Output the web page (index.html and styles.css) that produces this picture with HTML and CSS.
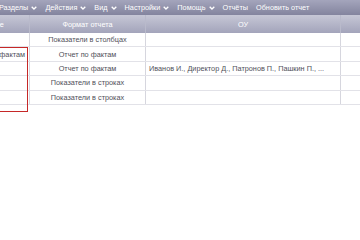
FILE: index.html
```html
<!DOCTYPE html>
<html lang="ru">
<head>
    <meta charset="UTF-8">
    <title>Отчеты</title>
    <link rel="stylesheet" href="styles.css">
</head>
<body>
    <div class="page">
        <!-- Верхнее меню -->
        <div class="menu">
            <span class="menu-item">Разделы <svg class="chev" viewBox="0 0 6 4"><polyline points="0.7,0.7 3,3 5.3,0.7"/></svg></span>
            <span class="menu-item">Действия <svg class="chev" viewBox="0 0 6 4"><polyline points="0.7,0.7 3,3 5.3,0.7"/></svg></span>
            <span class="menu-item">Вид <svg class="chev" viewBox="0 0 6 4"><polyline points="0.7,0.7 3,3 5.3,0.7"/></svg></span>
            <span class="menu-item">Настройки <svg class="chev" viewBox="0 0 6 4"><polyline points="0.7,0.7 3,3 5.3,0.7"/></svg></span>
            <span class="menu-item">Помощь <svg class="chev" viewBox="0 0 6 4"><polyline points="0.7,0.7 3,3 5.3,0.7"/></svg></span>
            <span class="menu-item">Отчёты</span>
            <span class="menu-item">Обновить отчет</span>
        </div>

        <!-- Таблица отчетов -->
        <div class="grid">
            <div class="row head">
                <div class="cell c1">Название</div>
                <div class="cell c2">Формат отчета</div>
                <div class="cell c3">ОУ</div>
                <div class="cell c4"></div>
            </div>
            <div class="row">
                <div class="cell c1"></div>
                <div class="cell c2">Показатели в столбцах</div>
                <div class="cell c3"></div>
                <div class="cell c4"></div>
            </div>
            <div class="row">
                <div class="cell c1 name">Отчет по фактам</div>
                <div class="cell c2">Отчет по фактам</div>
                <div class="cell c3"></div>
                <div class="cell c4"></div>
            </div>
            <div class="row">
                <div class="cell c1"></div>
                <div class="cell c2">Отчет по фактам</div>
                <div class="cell c3 left">Иванов И., Директор Д., Патронов П., Пашкин П., ...</div>
                <div class="cell c4"></div>
            </div>
            <div class="row">
                <div class="cell c1"></div>
                <div class="cell c2">Показатели в строках</div>
                <div class="cell c3"></div>
                <div class="cell c4"></div>
            </div>
            <div class="row">
                <div class="cell c1"></div>
                <div class="cell c2">Показатели в строках</div>
                <div class="cell c3"></div>
                <div class="cell c4"></div>
            </div>
        </div>

        <!-- Выделение -->
        <div class="mark"></div>
    </div>
</body>
</html>
```

FILE: styles.css
```css
/* Общие стили */
body {
    margin: 0;
    overflow: hidden;
    background: #ffffff;
    font-family: "Liberation Sans", Arial, sans-serif;
    font-size: 7.3px;
    color: #50505a;
}

.page {
    position: relative;
    width: 360px;
    height: 240px;
    overflow: hidden;
}

/* Меню */
.menu {
    display: flex;
    align-items: center;
    height: 15px;
    margin-left: -1px;
    gap: 8px;
    background: linear-gradient(#a4a5bc, #83849e);
    color: #ffffff;
    white-space: nowrap;
}

.menu-item {
    display: flex;
    align-items: center;
    gap: 3px;
}

.chev {
    width: 6px;
    height: 4px;
    fill: none;
    stroke: #ffffff;
    stroke-width: 1.3;
}

/* Таблица */
.grid {
    margin-left: -54px;
}

.row {
    display: flex;
    height: 14.4px;
    box-sizing: border-box;
    border-bottom: 1px solid #e2e2e8;
}

.row.head {
    height: 18px;
    border-bottom: none;
    background: linear-gradient(#c6c7d6, #a3a4bb);
    color: #ffffff;
}

.cell {
    flex-shrink: 0;
    display: flex;
    align-items: center;
    justify-content: center;
    box-sizing: border-box;
    border-right: 1px solid #d6d6de;
    white-space: nowrap;
    overflow: hidden;
}

.head .cell {
    border-right-color: #b9bacb;
}

.c1 { width: 84px; }
.c2 { width: 116px; }
.c3 { width: 195px; }
.c4 { width: 40px; border-right: none; }

.cell.name {
    justify-content: flex-end;
    padding-right: 4px;
}

.cell.left {
    justify-content: flex-start;
    padding-left: 3px;
}

/* Красная рамка выделения */
.mark {
    position: absolute;
    left: -10px;
    top: 47px;
    width: 36px;
    height: 63px;
    border: 1px solid #c62828;
}
```
